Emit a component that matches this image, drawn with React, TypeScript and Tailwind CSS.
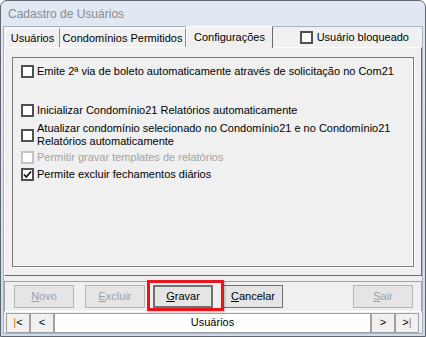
import React from "react";

function Box({ checked = false, disabled = false }: { checked?: boolean; disabled?: boolean }) {
  return (
    <span
      className={
        "flex h-[13px] w-[13px] shrink-0 items-center justify-center border-2 bg-white " +
        (disabled ? "border-[#c4c4c4]" : "border-[#505050]")
      }
    >
      {checked ? (
        <svg width="9" height="9" viewBox="0 0 9 9">
          <path d="M1 4.5 L3.3 7 L8 1.5" fill="none" stroke="#111" strokeWidth="1.8" />
        </svg>
      ) : null}
    </span>
  );
}

function Option({
  label,
  checked,
  disabled,
}: {
  label: React.ReactNode;
  checked?: boolean;
  disabled?: boolean;
}) {
  return (
    <div className="flex items-center gap-[3px]">
      <Box checked={checked} disabled={disabled} />
      <span className={"leading-[13px] " + (disabled ? "text-[#a3a3a3]" : "text-black")}>{label}</span>
    </div>
  );
}

function Btn({
  children,
  disabled,
  className = "",
}: {
  children: React.ReactNode;
  disabled?: boolean;
  className?: string;
}) {
  return (
    <div
      className={
        "flex h-[23px] w-[60px] items-center justify-center border bg-[#e5e5e5] " +
        (disabled ? "border-[#b5b5b5] text-[#9aa0aa]" : "border-[#707070] text-black") +
        " " +
        className
      }
    >
      {children}
    </div>
  );
}

function NavBtn({ children }: { children: React.ReactNode }) {
  return (
    <div className="flex h-[20px] w-[24px] items-center justify-center border border-[#a0a0a0] bg-[#f0f0f0] text-black">
      {children}
    </div>
  );
}

export default function App() {
  return (
    <div
      className="flex h-[337px] w-[426px] flex-col overflow-hidden rounded-t-[7px] border border-[#5f6670] bg-gradient-to-b from-[#e1e9f2] to-[#cddbea] text-[11px] text-black"
      style={{ fontFamily: '"Liberation Sans", Arial, sans-serif' }}
    >
      <div className="flex h-[25px] shrink-0 items-center pl-[7px] text-[12px] text-[#868b92]">
        Cadastro de Usuários
      </div>

      <div className="mx-[2px] mb-[2px] flex flex-1 flex-col border border-[#a6b2bf] bg-[#f0f0f0]">
        {/* tab header */}
        <div className="relative flex h-[20px] shrink-0 items-end pl-[1px]">
          <div className="flex h-[19px] w-[55px] items-center justify-center border-l border-t border-r border-l-white border-t-white border-r-[#8c8c8c]">
            Usuários
          </div>
          <div className="flex h-[19px] w-[126px] items-center justify-center border-t border-r border-t-white border-r-[#8c8c8c]">
            Condomínios Permitidos
          </div>
          <div className="relative z-10 -mb-[1px] flex h-[22px] w-[87px] items-center justify-center border-l border-t border-r border-l-white border-t-white border-r-[#696969] bg-[#f0f0f0] pb-[1px]">
            Configurações
          </div>
          <div className="ml-auto mr-[13px] flex h-[20px] items-center gap-[4px]">
            <Box />
            <span>Usuário bloqueado</span>
          </div>
        </div>

        {/* tab page */}
        <div className="h-[229px] shrink-0 border border-l-white border-t-white border-r-[#696969] border-b-[#696969] px-[7px] pt-[9px]">
          <div className="flex h-[210px] flex-col border border-[#7a7a7a] shadow-[inset_-1px_-1px_0_#ffffff,1px_1px_0_#ffffff] pl-[8px] pt-[7px]">
            <Option label="Emite 2ª via de boleto automaticamente através de solicitação no Com21" />
            <div className="mt-[26px]">
              <Option label="Inicializar Condomínio21 Relatórios automaticamente" />
            </div>
            <div className="mt-[5px] flex items-center gap-[3px]">
              <Box />
              <span className="leading-[13px]">
                Atualizar condomínio selecionado no Condomínio21 e no Condomínio21
                <br />
                Relatórios automaticamente
              </span>
            </div>
            <div className="mt-[3px]">
              <Option label="Permitir gravar templates de relatórios" disabled />
            </div>
            <div className="mt-[4px]">
              <Option label="Permite excluir fechamentos diários" checked />
            </div>
          </div>
        </div>

        {/* buttons */}
        <div className="relative mt-[5px] flex h-[31px] shrink-0 items-center border border-t-[#a0a0a0] border-l-[#a0a0a0] border-r-[#a0a0a0] border-b-white pl-[9px] pr-[8px]">
          <Btn disabled>
            <span><u>N</u>ovo</span>
          </Btn>
          <Btn disabled className="ml-[11px]">
            <span><u>E</u>xcluir</span>
          </Btn>
          <Btn className="ml-[8px] border-2 border-[#6b6b6b]">
            <span><u>G</u>ravar</span>
          </Btn>
          <Btn className="ml-[10px]">
            <span><u>C</u>ancelar</span>
          </Btn>
          <Btn disabled className="ml-auto">
            <span><u>S</u>air</span>
          </Btn>
          <div className="absolute left-[142px] top-[-2px] h-[31px] w-[77px] border-[3px] border-[#e8161b] shadow-[1px_1px_2px_rgba(0,0,0,0.25)]" />
        </div>

        {/* navigator */}
        <div className="flex h-[21px] shrink-0 items-center pl-[2px] pr-[3px]">
          <NavBtn>
            <span className="text-[#c07a00]">|</span>&lt;
          </NavBtn>
          <NavBtn>&lt;</NavBtn>
          <div className="flex h-[20px] flex-1 items-center justify-center border border-[#a0a0a0] bg-white">
            Usuários
          </div>
          <NavBtn>&gt;</NavBtn>
          <NavBtn>
            &gt;<span className="text-[#c07a00]">|</span>
          </NavBtn>
        </div>
      </div>
    </div>
  );
}
